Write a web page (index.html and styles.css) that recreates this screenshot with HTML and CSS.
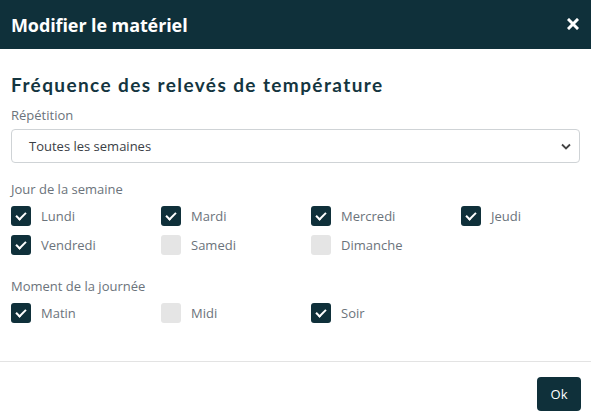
FILE: index.html
```html
<!DOCTYPE html>
<html lang="fr">
<head>
<meta charset="utf-8">
<link rel="stylesheet" href="styles.css">
</head>
<body>
<div class="modal">
  <header class="modal-header">
    <h1 class="modal-title">Modifier le matériel</h1>
    <button class="close" aria-label="Fermer">
      <svg width="12" height="12" viewBox="0 0 12 12"><path d="M2 2 L10 10 M10 2 L2 10" stroke="#fff" stroke-width="3" stroke-linecap="square"/></svg>
    </button>
  </header>
  <main class="modal-body">
    <h2 class="section-title">Fréquence des relevés de température</h2>
    <div class="field">
      <label class="label">Répétition</label>
      <div class="select">
        <span>Toutes les semaines</span>
        <svg width="10" height="7" viewBox="0 0 10 7"><path d="M1 1.5 L5 5.5 L9 1.5" fill="none" stroke="#444" stroke-width="1.8"/></svg>
      </div>
    </div>
    <div class="field group">
      <div class="label">Jour de la semaine</div>
      <div class="checks">
        <div class="check"><span class="box on"></span>Lundi</div>
        <div class="check"><span class="box on"></span>Mardi</div>
        <div class="check"><span class="box on"></span>Mercredi</div>
        <div class="check"><span class="box on"></span>Jeudi</div>
        <div class="check"><span class="box on"></span>Vendredi</div>
        <div class="check"><span class="box"></span>Samedi</div>
        <div class="check"><span class="box"></span>Dimanche</div>
      </div>
    </div>
    <div class="field group2">
      <div class="label">Moment de la journée</div>
      <div class="checks">
        <div class="check"><span class="box on"></span>Matin</div>
        <div class="check"><span class="box"></span>Midi</div>
        <div class="check"><span class="box on"></span>Soir</div>
      </div>
    </div>
  </main>
  <footer class="modal-footer">
    <button class="btn">Ok</button>
  </footer>
</div>
</body>
</html>
```

FILE: styles.css
```css
* { box-sizing: border-box; }
html, body { margin: 0; padding: 0; background: #fff; }
body { font-family: "Open Sans", "Noto Sans", sans-serif; color: #6b737b; }
.modal { width: 591px; height: 417px; display: flex; flex-direction: column; }
.modal-header {
  height: 49px; background: #0f303a; display: flex; align-items: center;
  justify-content: space-between; padding: 0 12px 0 11px;
}
.modal-title { margin: 0; color: #fff; font-size: 18px; font-weight: 700; font-family: "Open Sans", sans-serif; letter-spacing: -0.1px; }
.close { background: none; border: 0; padding: 0; display: flex; margin-top: -1px; }
.modal-body { padding: 25px 11px 0 11px; flex: 1; }
.section-title {
  margin: 0; font-family: "Lato", sans-serif; font-weight: 700; font-size: 19px;
  color: #143540; letter-spacing: 1.4px; line-height: 22px;
}
.field { margin-top: 10px; }
.label { font-size: 13px; line-height: 18px; color: #6b737b; display: block; }
.select {
  margin-top: 5px; height: 34px; border: 1px solid #cfd3d6; border-radius: 4px;
  display: flex; align-items: center; justify-content: space-between;
  padding: 0 8px 0 17px; font-size: 13px; color: #3b4046;
}
.group { margin-top: 17px; }
.group2 { margin-top: 22px; }
.checks { display: grid; grid-template-columns: repeat(4, 150px); row-gap: 9px; margin-top: 8px; }
.check { display: flex; align-items: center; font-size: 13px; color: #6b737b; height: 20px; }
.box {
  width: 20px; height: 20px; border-radius: 3px; background: #e5e5e5; margin-right: 10px;
  flex: none; position: relative;
}
.box.on { background: #0f303a; }
.box.on::after {
  content: ""; position: absolute; left: 7px; top: 4px; width: 4px; height: 8px;
  border: solid #fff; border-width: 0 2px 2px 0; transform: rotate(45deg);
}
.modal-footer {
  border-top: 1px solid #e3e3e3; height: 56px; display: flex; justify-content: flex-end;
  align-items: flex-start; padding: 15px 10px 0 0;
}
.btn {
  background: #0f303a; color: #fff; border: 0; border-radius: 4px; width: 44px; height: 34px;
  font-family: "Open Sans", sans-serif; font-size: 13px; padding: 0;
}
```
